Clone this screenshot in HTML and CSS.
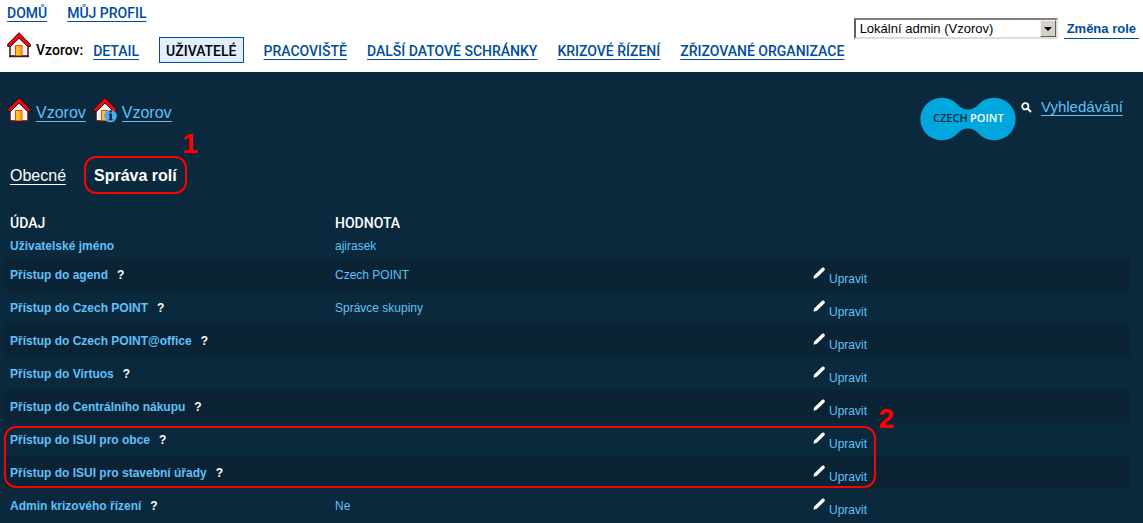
FILE: index.html
```html
<!DOCTYPE html>
<html lang="cs">
<head>
<meta charset="utf-8">
<title>Správa rolí</title>
<link rel="stylesheet" href="styles.css">
</head>
<body>
<svg class="defs" aria-hidden="true">
  <symbol id="house" viewBox="0 0 24 26">
    <path d="M3 13v11h18V13L12 4z" fill="#f7f7fb" stroke="#4a1512" stroke-width="1.5"/>
    <path d="M8.500 24V13.500h6.500V24z" fill="#ffc326" stroke="#e6460f"/>
    <path d="M12.500 14h2v9.500h-2z" fill="#ff9a12"/>
    <path d="M12 .7 23.300 12.200v2.200h-2.800L12 6.200l-8.500 8.200H.7v-2.200z" fill="#e60d0d" stroke="#3a0505" stroke-width="1"/>
    <path d="M2 24.500h20" stroke="#3b2020" stroke-width="1.500"/>
  </symbol>
  <symbol id="pencil" viewBox="0 0 12 12">
    <path d="M.5 11.800 1 8.800 8.600 1.200 10.200.2 12 1.700 11.300 3.400 3.800 10.800z" fill="#fff"/>
  </symbol>
</svg>

<header class="top">
  <div class="menus">
    <nav class="main-nav"><a href="#">DOMŮ</a><a href="#">MŮJ PROFIL</a></nav>
    <nav class="sub-nav">
      <span class="owner"><svg class="house"><use href="#house"/></svg><strong>Vzorov:</strong></span>
      <a href="#" class="first">DETAIL</a>
      <a href="#" class="current">UŽIVATELÉ</a>
      <a href="#">PRACOVIŠTĚ</a>
      <a href="#">DALŠÍ DATOVÉ SCHRÁNKY</a>
      <a href="#">KRIZOVÉ ŘÍZENÍ</a>
      <a href="#">ZŘIZOVANÉ ORGANIZACE</a>
    </nav>
  </div>
  <form class="role">
    <span class="picker">
      <select aria-label="Role"><option>Lokální admin (Vzorov)</option></select>
      <span class="arrow"></span>
    </span>
    <a href="#">Změna role</a>
  </form>
</header>

<main>
  <div class="path-bar">
    <nav class="path">
      <span class="crumb"><svg class="house"><use href="#house"/></svg><a href="#">Vzorov</a></span>
      <span class="crumb"><svg class="house" viewBox="0 0 24 26"><use href="#house" width="24" height="26"/><circle cx="17.500" cy="19" r="6.300" fill="#4cacf6"/><path d="M17.700 16.800v6.200M17.700 13.600v2" fill="none" stroke="#0b293d" stroke-width="2.400"/><path d="M15.700 17.200h2M15.700 22.800h4.200" stroke="#0b293d"/></svg><a href="#">Vzorov</a></span>
    </nav>
    <div class="tools">
      <svg class="logo" viewBox="0 0 96 44" role="img" aria-label="Czech POINT">
        <path d="M21.500.8C29 .8 33.500 3.600 37.500 7.500 41 10.900 43.500 12.500 48 12.500S55 10.900 58.500 7.500C62.500 3.600 67 .8 74.500.8A21.200 21.200 0 0 1 74.500 43.200C67 43.200 62.500 40.400 58.500 36.500 55 33.100 52.500 31.500 48 31.500S41 33.100 37.500 36.500C33.500 40.400 29 43.200 21.500 43.200A21.200 21.200 0 0 1 21.500.8z" fill="#00a7dc"/>
        <text x="13" y="25" class="logo-a">CZECH</text>
        <text x="50" y="25" class="logo-b">POINT</text>
      </svg>
      <svg class="lens" viewBox="0 0 11 11"><circle cx="4.300" cy="4.300" r="3.100" fill="none" stroke="#fff" stroke-width="1.800"/><path d="M6.800 6.800 10 10" stroke="#fff" stroke-width="2"/></svg>
      <a href="#">Vyhledávání</a>
    </div>
  </div>

  <nav class="tabs">
    <a href="#">Obecné</a>
    <strong class="tab-current">Správa rolí<span class="mark mark-one">1</span></strong>
  </nav>

  <div class="table-area">
    <table class="roles">
      <thead><tr><th class="name">ÚDAJ</th><th class="value">HODNOTA</th><th></th></tr></thead>
      <tbody>
        <tr class="plain"><th>Uživatelské jméno</th><td>ajirasek</td><td></td></tr>
        <tr><th>Přístup do agend<b>?</b></th><td>Czech POINT</td><td><a href="#"><svg><use href="#pencil"/></svg>Upravit</a></td></tr>
        <tr><th>Přístup do Czech POINT<b>?</b></th><td>Správce skupiny</td><td><a href="#"><svg><use href="#pencil"/></svg>Upravit</a></td></tr>
        <tr><th>Přístup do Czech POINT@office<b>?</b></th><td></td><td><a href="#"><svg><use href="#pencil"/></svg>Upravit</a></td></tr>
        <tr><th>Přístup do Virtuos<b>?</b></th><td></td><td><a href="#"><svg><use href="#pencil"/></svg>Upravit</a></td></tr>
        <tr><th>Přístup do Centrálního nákupu<b>?</b></th><td></td><td><a href="#"><svg><use href="#pencil"/></svg>Upravit</a></td></tr>
        <tr><th>Přístup do ISUI pro obce<b>?</b></th><td></td><td><a href="#"><svg><use href="#pencil"/></svg>Upravit</a></td></tr>
        <tr><th>Přístup do ISUI pro stavební úřady<b>?</b></th><td></td><td><a href="#"><svg><use href="#pencil"/></svg>Upravit</a></td></tr>
        <tr><th>Admin krizového řízení<b>?</b></th><td>Ne</td><td><a href="#"><svg><use href="#pencil"/></svg>Upravit</a></td></tr>
      </tbody>
    </table>
    <div class="row-frame"><span class="mark mark-two">2</span></div>
  </div>
</main>
</body>
</html>
```
FILE: styles.css
```css
* { box-sizing: border-box; }
body {
  margin: 0;
  background: #0b293d;
  color: #60c0fa;
  font-family: "Liberation Sans", Arial, sans-serif;
  font-size: 12px;
}
.defs { display: none; }
.house { width: 24px; height: 26px; flex: none; }

.top {
  display: flex;
  justify-content: space-between;
  align-items: flex-start;
  padding: 5px 4px 5px 7px;
  background: #fff;
  color: #000;
  font-size: 13px;
}
.top a { color: #004c9e; }
.top nav a, .top nav strong { font-family: Roboto, sans-serif; font-size: 14px; font-weight: 500; }
.top nav a { text-underline-offset: 3px; }
.main-nav { display: flex; gap: 20px; height: 16px; line-height: 16px; }
.sub-nav { display: flex; align-items: center; height: 46px; padding-top: 12px; white-space: nowrap; }
.sub-nav > a { margin-left: 20px; padding-top: 2px; line-height: 16px; }
.owner { display: flex; align-items: center; gap: 5px; height: 34px; }
.owner .house { margin-bottom: 10px; }
.sub-nav > .first { margin-left: 10px; }
.sub-nav > .current {
  padding: 5px 6px 3px;
  border: 1px solid #004c9e;
  background: #e0eeff;
  color: #000;
  text-decoration: none;
}
.role { display: flex; align-items: center; gap: 6px; padding-top: 13px; }
.role a {
  padding: 2px 3px 0;
  border-bottom: 1px solid #004c9e;
  font-weight: bold;
  line-height: 18px;
  text-decoration: none;
}
.picker {
  display: grid;
  width: 204px;
  height: 21px;
  border: 2px solid;
  border-color: #808080 #e0ddd8 #e0ddd8 #606060;
}
.picker select {
  grid-area: 1 / 1;
  appearance: none;
  border: 0;
  padding: 0 20px 0 4px;
  background: #fff;
  color: #000;
  font: 13px "Liberation Sans", Arial, sans-serif;
}
.arrow {
  grid-area: 1 / 1;
  justify-self: end;
  display: grid;
  place-items: center;
  width: 16px;
  border: 1px solid;
  border-color: #f4f2ee #606060 #606060 #f4f2ee;
  background: #d4d0c8;
  pointer-events: none;
}
.arrow::after {
  content: "";
  border: 4px solid transparent;
  border-top-color: #000;
  border-bottom: 0;
}

main { overflow: hidden; }
.path-bar {
  display: flex;
  justify-content: space-between;
  align-items: flex-start;
  padding: 25px 20px 0 7px;
  height: 84px;
}
.path { display: flex; gap: 7px; font-size: 16px; }
.crumb { display: flex; align-items: center; gap: 5px; }
.path a, .tools a {
  color: #60c0fa;
  border-bottom: 1px solid;
  line-height: 17px;
  text-decoration: none;
}
.path a { margin-top: 5px; }
.tools { display: flex; align-items: flex-start; font-size: 15px; }
.logo { width: 96px; height: 44px; }
.logo text { font: 600 11px "Open Sans", sans-serif; }
.logo-a { fill: #0b293d; }
.logo-b { fill: #fff; }
.lens { width: 11px; height: 11px; margin: 5px 9px 0 5px; }
.tools a { margin-top: 1px; }

.tabs {
  display: flex;
  align-items: center;
  gap: 18px;
  padding-left: 10px;
  color: #fff;
  font-size: 16px;
}
.tabs a { margin-top: 2px; color: #fff; border-bottom: 1px solid; line-height: 17px; text-decoration: none; }
.tab-current {
  position: relative;
  padding: 9px 8px 7px;
  border: 2px solid #f00;
  border-radius: 12px;
  line-height: 18px;
}
.mark { position: absolute; color: #f00; font-size: 28px; font-weight: bold; line-height: 28px; }
.mark-one { right: -13px; bottom: 34px; }
.mark-two { right: -20px; top: -23px; }

.table-area { position: relative; margin: 17px 13px 0 5px; }
.roles { width: 100%; border-collapse: collapse; table-layout: fixed; }
.name { width: 325px; }
.value { width: 478px; }
th, td { padding: 0 5px; text-align: left; }
thead th { height: 23px; color: #fff; font: 500 14px Roboto, sans-serif; }
tbody tr { height: 33px; }
tbody .plain { height: 24px; }
tbody tr:nth-child(even) { background: #0a2335; }
th b { margin-left: 9px; color: #fff; }
td a {
  display: flex;
  align-items: flex-start;
  gap: 4px;
  height: 18px;
  color: #60c0fa;
  line-height: 26px;
  text-decoration: none;
}
td svg { width: 12px; height: 12px; margin-top: 1px; }
.row-frame {
  position: absolute;
  left: -1px;
  width: 872px;
  bottom: 34px;
  height: 62px;
  border: 2px solid #f00;
  border-radius: 12px;
}
```
